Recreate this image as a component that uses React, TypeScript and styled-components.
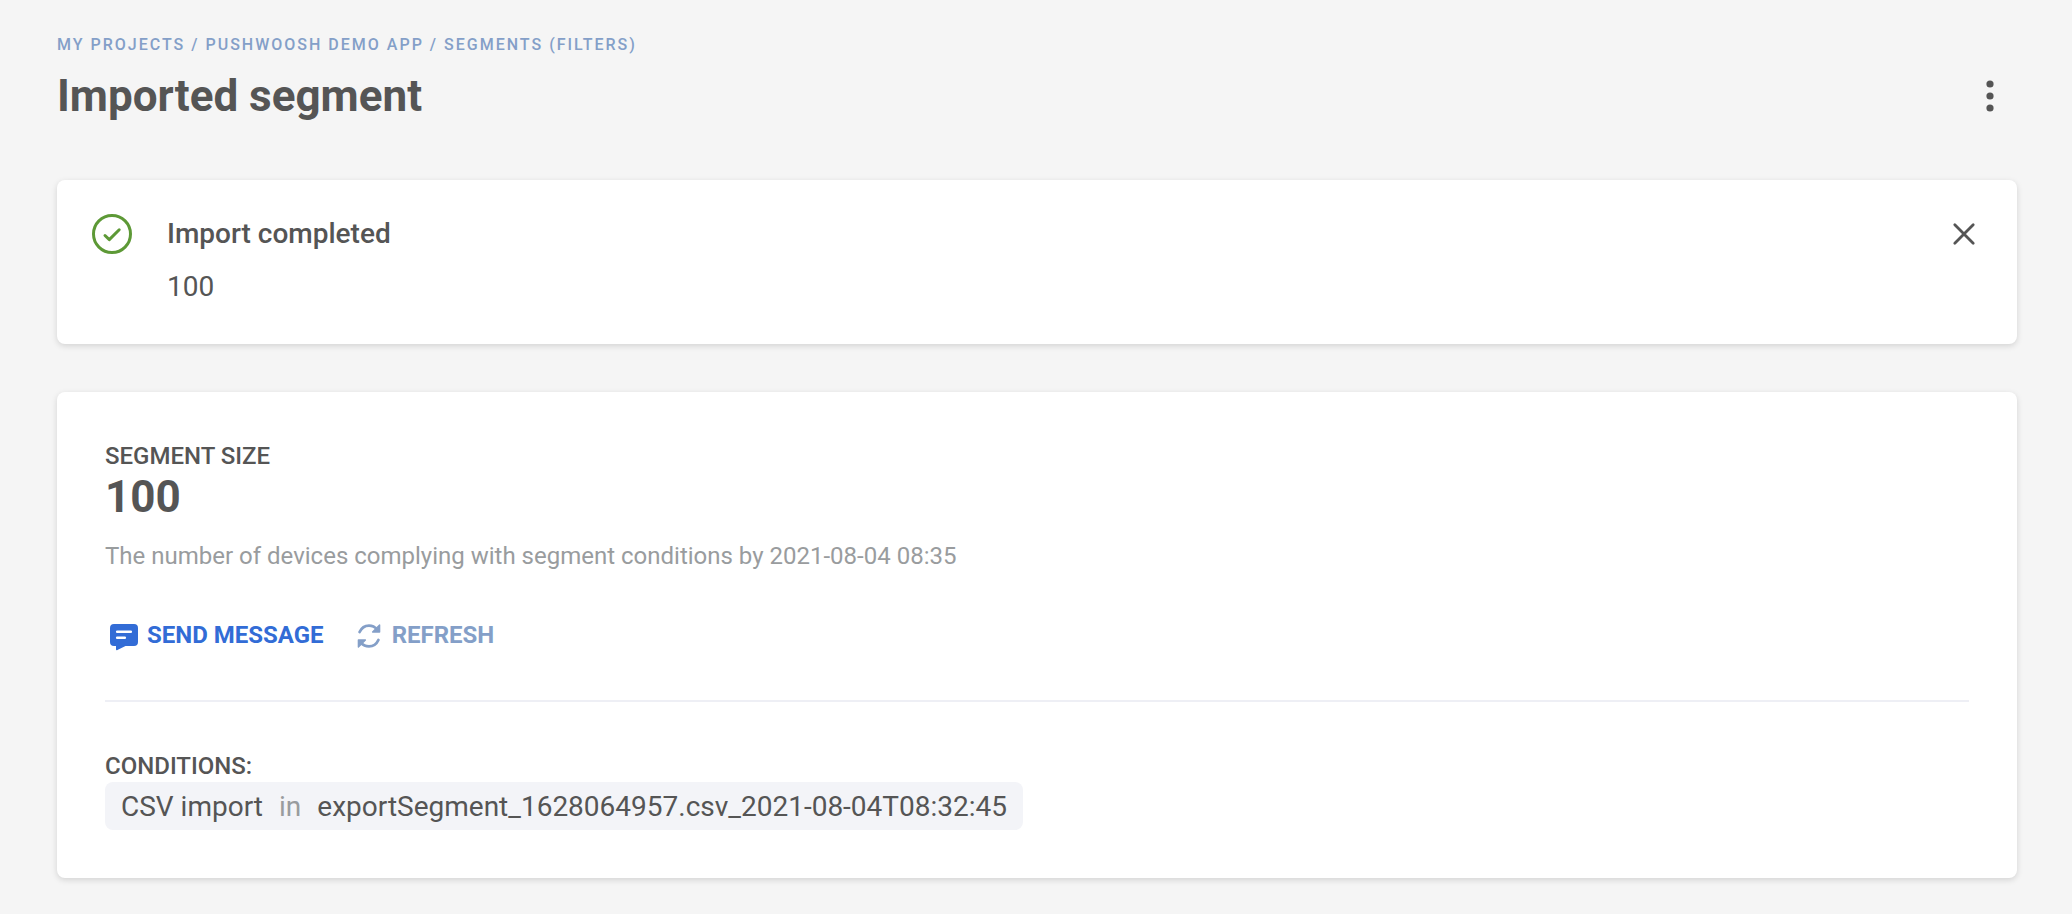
import React, { useState } from "react";
import styled, { createGlobalStyle } from "styled-components";

const GlobalStyle = createGlobalStyle`
  * {
    box-sizing: border-box;
  }
  body {
    margin: 0;
    background: #f5f5f5;
    color: #555555;
    font-family: Roboto, "Liberation Sans", sans-serif;
    font-size: 28px;
    line-height: 36px;
  }
  h1, h2, h3, p, ol {
    margin: 0;
    padding: 0;
  }
`;

const Page = styled.main`
  min-height: 100vh;
  padding: 33px 55px 36px 57px;
`;

const Breadcrumbs = styled.ol`
  display: flex;
  list-style: none;
  font-size: 16px;
  line-height: 24px;
  font-weight: 500;
  letter-spacing: 2px;
  text-transform: uppercase;
  color: #849fc8;
`;

const Crumb = styled.li`
  white-space: pre;

  & + &::before {
    content: " / ";
  }
`;

const CrumbLink = styled.a`
  color: inherit;
  text-decoration: none;
`;

const TitleRow = styled.header`
  display: flex;
  align-items: center;
  justify-content: space-between;
  height: 78px;
`;

const Title = styled.h1`
  font-size: 44px;
  line-height: 56px;
  font-weight: 700;
`;

const IconButton = styled.button<{ $width: number }>`
  display: flex;
  align-items: center;
  justify-content: center;
  width: ${({ $width }) => $width}px;
  height: 40px;
  padding: 0;
  border: 0;
  background: none;
  color: inherit;
  cursor: pointer;
`;

const Card = styled.section`
  background: #ffffff;
  border-radius: 8px;
  box-shadow: 0 2px 6px rgba(0, 0, 0, 0.14);
`;

const Notice = styled(Card)`
  display: flex;
  align-items: flex-start;
  gap: 35px;
  margin: 45px 0 48px;
  padding: 34px 33px 37px 35px;
`;

const NoticeBody = styled.div`
  display: flex;
  flex: 1;
  flex-direction: column;
  gap: 17px;
  padding: 2px 0;
`;

const NoticeTitle = styled.h2`
  font-size: 28px;
  line-height: 36px;
  font-weight: 500;
`;

const Details = styled(Card)`
  padding: 48px;
`;

const Label = styled.h3`
  font-size: 24px;
  line-height: 32px;
  font-weight: 500;
  text-transform: uppercase;
`;

const Size = styled.p`
  font-size: 44px;
  line-height: 50px;
  font-weight: 700;
`;

const Hint = styled.p`
  margin-top: 18px;
  font-size: 24px;
  line-height: 32px;
  color: #999c9e;
`;

const Actions = styled.div`
  display: flex;
  gap: 26px;
  margin: 48px 0;
`;

const Action = styled.button<{ $color: string }>`
  display: flex;
  align-items: flex-start;
  gap: 4px;
  height: 32px;
  padding: 0;
  border: 0;
  background: none;
  font-family: inherit;
  font-size: 24px;
  line-height: 30px;
  font-weight: 700;
  text-transform: uppercase;
  color: ${({ $color }) => $color};
  cursor: pointer;
`;

const Divider = styled.hr`
  height: 2px;
  margin: 0 0 48px;
  border: 0;
  background: #eeeff5;
`;

const Condition = styled.p`
  display: flex;
  gap: 16px;
  width: fit-content;
  padding: 7px 16px 5px;
  border-radius: 8px;
  background: #f3f4f8;
`;

const Operator = styled.span`
  color: #999c9e;
`;

const DotsIcon = () => (
  <svg width="8" height="32" viewBox="0 0 8 32" fill="currentColor" aria-hidden="true">
    <circle cx="4" cy="4" r="3.6" />
    <circle cx="4" cy="16" r="3.6" />
    <circle cx="4" cy="28" r="3.6" />
  </svg>
);

const CheckIcon = () => (
  <svg width="40" height="40" viewBox="0 0 40 40" fill="none" stroke="#5d9936" strokeWidth="3" aria-hidden="true">
    <circle cx="20" cy="20" r="18.5" />
    <path d="M13 21.5 L17.3 25.6 L27.2 15.8" strokeLinecap="round" strokeLinejoin="round" />
  </svg>
);

const CloseIcon = () => (
  <svg width="24" height="24" viewBox="0 0 24 24" fill="none" stroke="currentColor" strokeWidth="2.8" strokeLinecap="round" aria-hidden="true">
    <path d="M2.8 2.8 L21.2 21.2 M21.2 2.8 L2.8 21.2" />
  </svg>
);

const MessageIcon = () => (
  <svg width="38" height="32" viewBox="0 0 38 32" aria-hidden="true">
    <path
      fill="currentColor"
      d="M9 4 H29 Q33 4 33 8 V22 Q33 26 29 26 H20.5 L12.4 30 Q11 30.6 11 29.2 V26 H9 Q5 26 5 22 V8 Q5 4 9 4 Z"
    />
    <path d="M12.2 11.8 H25.8 M12.2 17.8 H19.8" stroke="#ffffff" strokeWidth="2.6" strokeLinecap="round" />
  </svg>
);

const RefreshIcon = () => (
  <svg width="38" height="32" viewBox="0 0 38 32" aria-hidden="true">
    <g fill="none" stroke="currentColor" strokeWidth="2.8" strokeLinecap="round">
      <path d="M9.6 12 C11.6 7.6 15.2 5.6 19 5.6 C22.4 5.6 25 7 27 9.4" />
      <path d="M28.4 20 C26.4 24.4 22.8 26.4 19 26.4 C15.6 26.4 13 25 11 22.6" />
    </g>
    <g fill="currentColor" stroke="currentColor" strokeWidth="1.4" strokeLinejoin="round">
      <path d="M29.6 4.9 V12 H22.6 L25.6 8.9 Z" />
      <path d="M8.4 27.1 V20 H15.4 L12.4 23.1 Z" />
    </g>
  </svg>
);

const crumbs = ["My projects", "Pushwoosh demo app", "Segments (filters)"];

export default function App() {
  const [noticeOpen, setNoticeOpen] = useState(true);

  return (
    <>
      <GlobalStyle />
      <Page>
        <nav aria-label="Breadcrumb">
          <Breadcrumbs>
            {crumbs.map((crumb) => (
              <Crumb key={crumb}>
                <CrumbLink href="#">{crumb}</CrumbLink>
              </Crumb>
            ))}
          </Breadcrumbs>
        </nav>
        <TitleRow>
          <Title>Imported segment</Title>
          <IconButton type="button" $width={54} aria-label="More actions">
            <DotsIcon />
          </IconButton>
        </TitleRow>

        {noticeOpen && (
          <Notice role="status">
            <CheckIcon />
            <NoticeBody>
              <NoticeTitle>Import completed</NoticeTitle>
              <p>100</p>
            </NoticeBody>
            <IconButton type="button" $width={40} aria-label="Close" onClick={() => setNoticeOpen(false)}>
              <CloseIcon />
            </IconButton>
          </Notice>
        )}

        <Details>
          <Label>Segment size</Label>
          <Size>100</Size>
          <Hint>The number of devices complying with segment conditions by 2021-08-04 08:35</Hint>
          <Actions>
            <Action type="button" $color="#326cd6">
              <MessageIcon />
              Send message
            </Action>
            <Action type="button" $color="#849fc8">
              <RefreshIcon />
              Refresh
            </Action>
          </Actions>
          <Divider />
          <Label>Conditions:</Label>
          <Condition>
            <span>CSV import</span>
            <Operator>in</Operator>
            <span>exportSegment_1628064957.csv_2021-08-04T08:32:45</span>
          </Condition>
        </Details>
      </Page>
    </>
  );
}
